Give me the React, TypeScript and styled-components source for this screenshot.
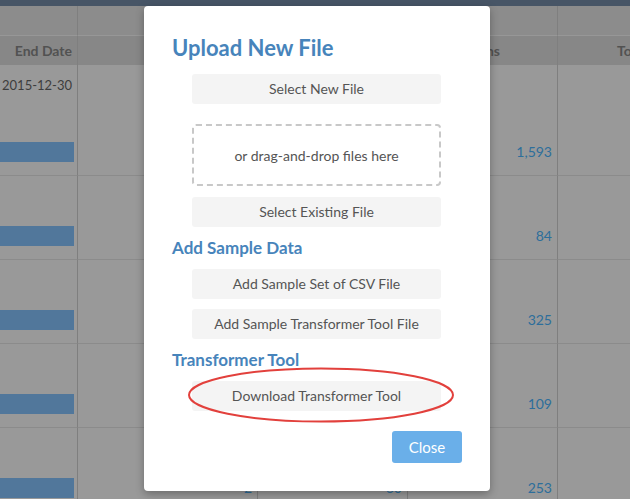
import { Fragment } from "react";
import styled, { createGlobalStyle } from "styled-components";

const GlobalStyle = createGlobalStyle`
  html, body {
    margin: 0;
    padding: 0;
    background: #999999;
    font-family: Lato, "Open Sans", "Liberation Sans", sans-serif;
  }
  * {
    box-sizing: border-box;
  }
`;

const Page = styled.div`
  position: relative;
  width: 630px;
  height: 499px;
  overflow: hidden;
  background: #999999;
`;

const TopBar = styled.div`
  height: 6px;
  background: #475566;
`;

const Table = styled.div`
  display: grid;
  grid-template-columns: 78px 180px 150px 150px 200px;
  grid-auto-rows: 84px;
  grid-template-rows: 30px 29px 111px;
  width: 758px;
`;

const GroupCell = styled.div`
  background: #8c8c8c;
  border-right: 1px solid #7f7f7f;
  border-bottom: 1px solid #979797;
`;

const HeaderCell = styled.div<{ $padRight?: number; $padLeft?: number }>`
  display: flex;
  align-items: center;
  justify-content: ${(p) => (p.$padLeft !== undefined ? "flex-start" : "flex-end")};
  padding-right: ${(p) => p.$padRight ?? 5}px;
  padding-left: ${(p) => p.$padLeft ?? 0}px;
  background: #878787;
  border-right: 1px solid #7f7f7f;
  font-size: 14px;
  font-weight: 700;
  color: #525252;
  white-space: nowrap;
  overflow: hidden;
`;

const Cell = styled.div`
  display: flex;
  flex-direction: column;
  align-items: flex-end;
  padding: 5px 5px 13px 0;
  border-right: 1px solid #7f7f7f;
  border-bottom: 1px solid #8b8b8b;
  font-size: 13px;
  color: #3d3d3d;
`;

const DateText = styled.div`
  line-height: 20px;
  padding-top: 5px;
`;

const Bar = styled.div`
  align-self: stretch;
  height: 20px;
  margin-top: auto;
  margin-right: -2px;
  background: #51779b;
`;

const Count = styled.div`
  height: 20px;
  margin-top: auto;
  line-height: 20px;
  font-size: 14px;
  color: #2d6e9b;
`;

const Modal = styled.div`
  position: absolute;
  left: 144px;
  top: 6px;
  width: 346px;
  height: 485px;
  display: flex;
  flex-direction: column;
  padding: 29px 28px 28px;
  background: #ffffff;
  border-radius: 4px;
  box-shadow: 0 3px 9px rgba(0, 0, 0, 0.3);
`;

const Title = styled.h2`
  margin: 0;
  font-size: 22px;
  line-height: 26px;
  font-weight: 700;
  color: #4784bb;
`;

const SectionTitle = styled.h3<{ $gap: number }>`
  margin: ${(p) => p.$gap}px 0 0;
  font-size: 17px;
  line-height: 20px;
  font-weight: 700;
  color: #4784bb;
`;

const ActionButton = styled.button<{ $gap: number }>`
  display: block;
  width: 249px;
  height: 30px;
  margin: ${(p) => p.$gap}px 0 0 20px;
  padding: 0 0 2px;
  border: none;
  border-radius: 3px;
  background: #f4f4f4;
  font-family: inherit;
  font-size: 14px;
  color: #555555;
  cursor: pointer;
`;

const DropZone = styled.div`
  display: flex;
  align-items: center;
  justify-content: center;
  width: 249px;
  height: 62px;
  margin: 20px 0 0 20px;
  border: 2px dashed #c8c8c8;
  border-radius: 4px;
  font-size: 14px;
  color: #555555;
`;

const Highlight = styled.div`
  position: relative;
  margin-top: 11px;
`;

const Ring = styled.svg`
  position: absolute;
  left: 16px;
  top: -14px;
  pointer-events: none;
`;

const Footer = styled.div`
  display: flex;
  justify-content: flex-end;
  margin-top: 20px;
`;

const CloseButton = styled.button`
  width: 70px;
  height: 32px;
  border: none;
  border-radius: 3px;
  background: #6aafe9;
  color: #ffffff;
  font-family: inherit;
  font-size: 15px;
  cursor: pointer;
`;

// only the last row's middle columns peek out below the dialog
const rows = [
  { date: "2015-12-30", files: "", cols: "", count: "1,593" },
  { date: "", files: "", cols: "", count: "84" },
  { date: "", files: "", cols: "", count: "325" },
  { date: "", files: "", cols: "", count: "109" },
  { date: "", files: "2", cols: "60", count: "253" },
];

const App = () => {
  return (
    <>
      <GlobalStyle />
      <Page>
        <TopBar />
        <Table>
          {[0, 1, 2, 3, 4].map((i) => (
            <GroupCell key={i} />
          ))}
          <HeaderCell>End Date</HeaderCell>
          <HeaderCell />
          <HeaderCell />
          <HeaderCell $padRight={57}>ns</HeaderCell>
          <HeaderCell $padLeft={59}>Total Rows</HeaderCell>
          {rows.map((r, i) => (
            <Fragment key={i}>
              <Cell>
                <DateText>{r.date}</DateText>
                <Bar />
              </Cell>
              <Cell>{r.files && <Count>{r.files}</Count>}</Cell>
              <Cell>{r.cols && <Count>{r.cols}</Count>}</Cell>
              <Cell>
                <Count>{r.count}</Count>
              </Cell>
              <Cell />
            </Fragment>
          ))}
        </Table>

        <Modal>
          <Title>Upload New File</Title>
          <ActionButton $gap={13}>Select New File</ActionButton>
          <DropZone>or drag-and-drop files here</DropZone>
          <ActionButton $gap={11}>Select Existing File</ActionButton>

          <SectionTitle $gap={11}>Add Sample Data</SectionTitle>
          <ActionButton $gap={11}>Add Sample Set of CSV File</ActionButton>
          <ActionButton $gap={10}>Add Sample Transformer Tool File</ActionButton>

          <SectionTitle $gap={11}>Transformer Tool</SectionTitle>
          <Highlight>
            <ActionButton $gap={0}>Download Transformer Tool</ActionButton>
            <Ring width="266" height="56" viewBox="0 0 266 56">
              <ellipse
                cx="133"
                cy="28"
                rx="132"
                ry="26.5"
                fill="none"
                stroke="#e2403c"
                strokeWidth="2"
              />
            </Ring>
          </Highlight>

          <Footer>
            <CloseButton>Close</CloseButton>
          </Footer>
        </Modal>
      </Page>
    </>
  );
};

export default App;
